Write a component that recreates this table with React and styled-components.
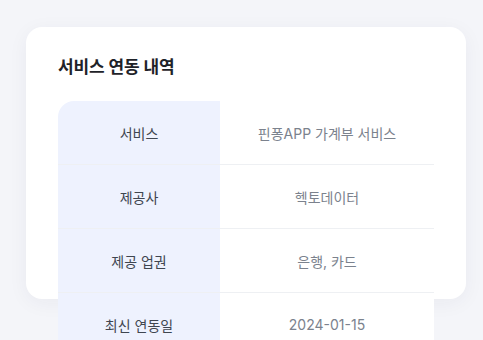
import React from 'react'
import styled, { createGlobalStyle } from 'styled-components'

const GlobalStyle = createGlobalStyle`
  html, body {
    margin: 0;
    padding: 0;
    background: #f4f5f9;
    font-family: Inter, "Noto Sans CJK KR", "Noto Sans", sans-serif;
  }
  * { box-sizing: border-box; }
`

const Page = styled.div`
  width: 483px;
  height: 340px;
  overflow: hidden;
  padding: 27px 17px 0 26px;
`

const Card = styled.section`
  width: 440px;
  height: 272px;
  background: #fff;
  border-radius: 16px;
  box-shadow: 0 4px 20px rgba(30, 40, 80, 0.05);
  padding: 28px 32px 0;
`

const Title = styled.h2`
  margin: 0 0 21px;
  font-size: 17px;
  line-height: 25px;
  font-weight: 700;
  color: #1f2329;
  letter-spacing: -0.1px;
`

const Table = styled.div`
  display: grid;
  grid-template-columns: 162px 214px;
  border-top-left-radius: 16px;
  overflow: hidden;
`

const Cell = styled.div`
  height: 64px;
  display: flex;
  align-items: center;
  justify-content: center;
  font-size: 14px;
  border-bottom: 1px solid #eef0f3;
  background: ${p => (p.$head ? '#eef2fe' : '#fff')};
  color: ${p => (p.$head ? '#3f4650' : '#7b828d')};
`

const rows = [
  ['서비스', '핀퐁APP 가계부 서비스'],
  ['제공사', '헥토데이터'],
  ['제공 업권', '은행, 카드'],
  ['최신 연동일', '2024-01-15'],
]

export default function App() {
  return (
    <Page>
      <GlobalStyle />
      <Card>
        <Title>서비스 연동 내역</Title>
        <Table>
          {rows.map(([k, v]) => (
            <React.Fragment key={k}>
              <Cell $head>{k}</Cell>
              <Cell>{v}</Cell>
            </React.Fragment>
          ))}
        </Table>
      </Card>
    </Page>
  )
}
